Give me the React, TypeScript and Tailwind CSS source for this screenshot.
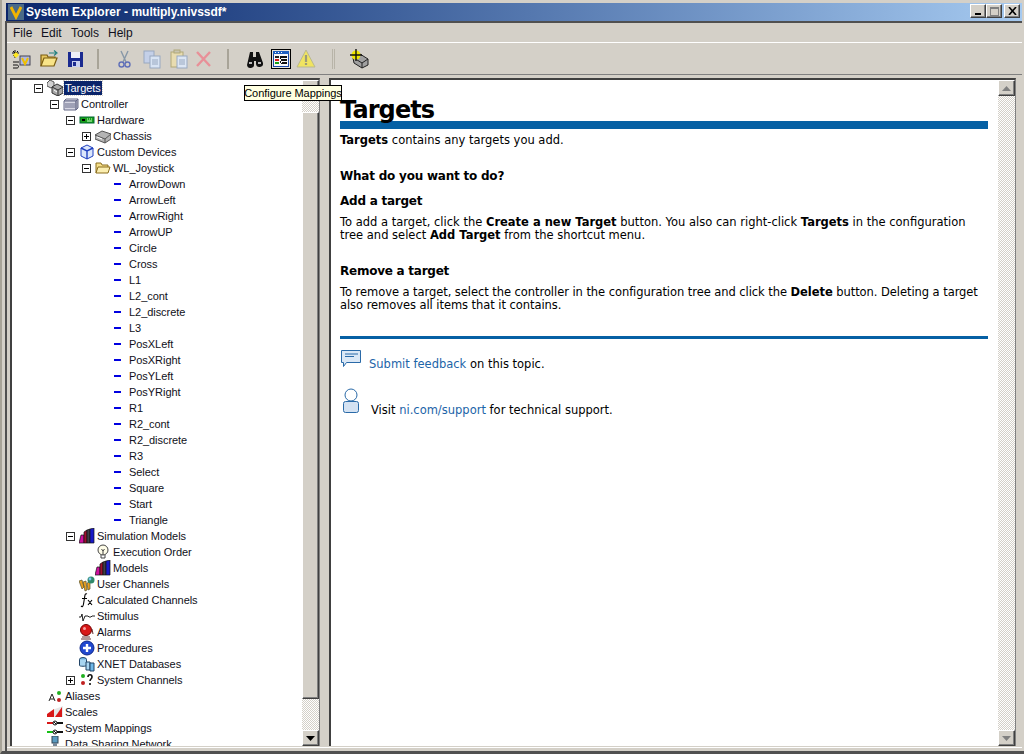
import React from "react";

const ditherClass =
  "bg-[repeating-conic-gradient(#d4d0c8_0_25%,#ffffff_0_50%)] bg-[length:2px_2px]";

const bevelClass =
  "bg-[#d4d0c8] border border-t-white border-l-white border-r-[#404040] border-b-[#404040] shadow-[inset_-1px_-1px_0_#808080]";

/* tree icons, all 16x16 */
const TargetsIcon = () => (
  <svg width="16" height="16" viewBox="0 0 16 16">
    <path d="M0 3l3-3 4 2v4L4 8 0 6z" fill="#d0d0d0" stroke="#555" />
    <path d="M5 7l5-3 6 3v6l-5 3-6-3z" fill="#a8a8a8" stroke="#333" />
    <path d="M5 7l6 3 5-3M11 10v6" fill="none" stroke="#333" />
    <path d="M7 10l3 2" stroke="#fff" />
  </svg>
);
const ControllerIcon = () => (
  <svg width="16" height="16" viewBox="0 0 16 16">
    <path d="M1 5l2-2h12l-2 2H1z" fill="#f0f0f4" stroke="#666a88" />
    <path d="M1 5h12v9H1z" fill="#d8d8e4" stroke="#666a88" />
    <path d="M13 5l2-2v9l-2 2z" fill="#b0b0c0" stroke="#666a88" />
    <path d="M3 7v5M5 7v5M7 7v5M9 7v5M11 7v5" stroke="#666a88" fill="none" />
  </svg>
);
const HardwareIcon = () => (
  <svg width="16" height="16" viewBox="0 0 16 16">
    <rect x="1" y="5" width="14" height="6" fill="#18a018" stroke="#063" />
    <rect x="3" y="7" width="3" height="2" fill="#000" />
    <path d="M8 7h1M10 7h1M12 7h1M8 9h5" stroke="#cfc" />
  </svg>
);
const ChassisIcon = () => (
  <svg width="16" height="16" viewBox="0 0 16 16">
    <path d="M0 7l7-4 9 3v5l-6 4-10-4z" fill="#b4b4b4" stroke="#555" />
    <path d="M0 7l10 4 6-5M10 11v4" fill="none" stroke="#555" />
    <path d="M2 9l5 2" stroke="#fff" />
  </svg>
);
const CubeIcon = () => (
  <svg width="16" height="16" viewBox="0 0 16 16">
    <path d="M8 1l6 3v8l-6 3-6-3V4z" fill="#dbe6fb" stroke="#2040c0" />
    <path d="M2 4l6 3 6-3M8 7v8" fill="none" stroke="#2040c0" strokeWidth="1.400" />
  </svg>
);
const FolderIcon = () => (
  <svg width="16" height="16" viewBox="0 0 16 16">
    <path d="M1 13V3h5l1 2h6v2" fill="#f6e08a" stroke="#8a6d1c" />
    <path d="M1 13l2-6h12l-2 6z" fill="#fbeeb0" stroke="#8a6d1c" />
  </svg>
);
const DashIcon = () => (
  <svg width="16" height="16" viewBox="0 0 16 16">
    <rect x="3" y="7" width="7" height="2" fill="#0000e0" />
  </svg>
);
const ModelsIcon = () => (
  <svg width="16" height="16" viewBox="0 0 16 16">
    <path d="M0 15l2-8h3v8z" fill="#d010a0" stroke="#111" strokeWidth=".7" />
    <path d="M5 15V4l3-2v13z" fill="#a01030" stroke="#111" strokeWidth=".7" />
    <path d="M8 15V2l3-1v14z" fill="#404048" stroke="#111" strokeWidth=".7" />
    <path d="M11 15V1l4-1v15z" fill="#1818c8" stroke="#111" strokeWidth=".7" />
  </svg>
);
const BulbIcon = () => (
  <svg width="16" height="16" viewBox="0 0 16 16">
    <circle cx="8" cy="6" r="5" fill="#fffde8" stroke="#444" />
    <path d="M6 11v3h4v-3M6.500 5l1.500 2 1.500-2M8 7v4" fill="none" stroke="#444" />
  </svg>
);
const UserChannelsIcon = () => (
  <svg width="16" height="16" viewBox="0 0 16 16">
    <path d="M0 5l3-1 2 7-2 2zM4 6l3-1 1 9-2 1zM8 7l3-1v7l-2 1z" fill="#e8a020" stroke="#553" strokeWidth=".7" />
    <circle cx="12" cy="4" r="3.500" fill="#2f8a6a" />
    <circle cx="11" cy="3" r="1.400" fill="#7fc4f0" />
  </svg>
);
const FxIcon = () => (
  <svg width="16" height="16" viewBox="0 0 16 16">
    <path d="M8 2C6 1 6 3 5.500 6l-1 6C4 15 3 15 2 14M3 6.500h5M9 8l4 5M13 8l-4 5" fill="none" stroke="#000" strokeWidth="1.100" />
  </svg>
);
const StimulusIcon = () => (
  <svg width="16" height="16" viewBox="0 0 16 16">
    <path d="M0 9h2l1-3 1 7 2-5h3l1 1h2l1-1h3" fill="none" stroke="#222" />
  </svg>
);
const AlarmIcon = () => (
  <svg width="16" height="16" viewBox="0 0 16 16">
    <circle cx="7" cy="6" r="5.500" fill="#d81818" stroke="#700" />
    <circle cx="5.500" cy="4.500" r="1.500" fill="#f8a0a0" />
    <path d="M3 13h8M2 15h10M13 5l1 5" stroke="#633" fill="none" />
  </svg>
);
const ProceduresIcon = () => (
  <svg width="16" height="16" viewBox="0 0 16 16">
    <circle cx="8" cy="8" r="7" fill="#2048d0" stroke="#102888" />
    <path d="M8 4v8M4 8h8" stroke="#fff" strokeWidth="2.400" />
  </svg>
);
const XnetIcon = () => (
  <svg width="16" height="16" viewBox="0 0 16 16">
    <ellipse cx="4" cy="3.500" rx="3.500" ry="2" fill="#70b8e8" stroke="#246" />
    <path d="M.5 3.500v6c0 1 7 1 7 0v-6" fill="#a8d4f0" stroke="#246" />
    <path d="M7 6h4v8H7z" fill="#a8d4f0" stroke="#246" />
    <path d="M11 7h4v8h-4z" fill="#70b8e8" stroke="#246" />
  </svg>
);
const SysChannelsIcon = () => (
  <svg width="16" height="16" viewBox="0 0 16 16">
    <circle cx="4" cy="4" r="2" fill="#20b020" />
    <circle cx="4" cy="11" r="2" fill="#c02020" />
    <path d="M9 5c0-3 4-3 4 0 0 2-2 2-2 4M11 11v2" fill="none" stroke="#111" strokeWidth="1.600" />
  </svg>
);
const AliasesIcon = () => (
  <svg width="16" height="16" viewBox="0 0 16 16">
    <path d="M2 13l3-7 3 7M3 11h4" fill="none" stroke="#222" />
    <circle cx="12" cy="5" r="2" fill="#20b020" />
    <circle cx="12" cy="12" r="2" fill="#c02020" />
  </svg>
);
const ScalesIcon = () => (
  <svg width="16" height="16" viewBox="0 0 16 16">
    <path d="M0 10l7-5v8H0z" fill="#d81818" />
    <path d="M7 5h1l8-3v11H7z" fill="#e8e8e8" />
    <path d="M8 13l7-10v10z" fill="#d81818" />
  </svg>
);
const MappingsIcon = () => (
  <svg width="16" height="16" viewBox="0 0 16 16">
    <rect x="0" y="2" width="6" height="2" fill="#d81818" />
    <rect x="10" y="2" width="6" height="2" fill="#111" />
    <rect x="0" y="11" width="6" height="2" fill="#18c018" />
    <rect x="10" y="11" width="6" height="2" fill="#111" />
    <circle cx="8" cy="3" r="2" fill="#fff" stroke="#111" />
    <circle cx="8" cy="12" r="2" fill="#fff" stroke="#111" />
    <path d="M7 2l2 2M7 11l2 2" stroke="#111" />
  </svg>
);
const NetworkIcon = () => (
  <svg width="16" height="16" viewBox="0 0 16 16">
    <rect x="5" y="0" width="6" height="7" fill="#5a9ac0" stroke="#345" />
    <rect x="6" y="7" width="4" height="8" fill="#789" />
  </svg>
);

/* toolbar icons, 20x20 */
const NewIcon = () => (
  <svg width="20" height="20" viewBox="0 0 20 20">
    <path d="M3 1v8M0 4h7M1 2l5 5M6 2L1 7" stroke="#111" />
    <path d="M4 3l3 3-3 3-3-3z" fill="#ffe820" />
    <rect x="8" y="7" width="10" height="9" fill="#b0b8e0" stroke="#445" />
    <path d="M10 9l3 6 3-6" fill="none" stroke="#f0c000" strokeWidth="2" />
    <path d="M1 13h6M1 16h4c2 0 2 3 0 3H1" fill="none" stroke="#111" />
  </svg>
);
const OpenIcon = () => (
  <svg width="20" height="20" viewBox="0 0 20 20">
    <path d="M2 17V6h6l1 2h7v2" fill="#e8c860" stroke="#7a5c10" strokeWidth="1.200" />
    <path d="M2 17l3-8h13l-3 8z" fill="#f8e488" stroke="#7a5c10" strokeWidth="1.200" />
    <path d="M10 4h7M15 1.500L18 4l-3 2.500" fill="none" stroke="#208080" strokeWidth="1.200" />
  </svg>
);
const SaveIcon = () => (
  <svg width="20" height="20" viewBox="0 0 20 20">
    <path d="M2 3h15v15H2z" fill="#1a2a90" />
    <rect x="5" y="3" width="9" height="6" fill="#f0f0f8" />
    <rect x="6" y="12" width="8" height="6" fill="#c8d0f0" />
    <rect x="7" y="13" width="3" height="4" fill="#1a2a90" />
  </svg>
);
const CutIcon = () => (
  <svg width="20" height="20" viewBox="0 0 20 20">
    <path d="M6 2l5 11M13 2L8 13" stroke="#8898a8" strokeWidth="1.400" />
    <circle cx="6.500" cy="15.500" r="2.500" fill="none" stroke="#6070b8" strokeWidth="1.400" />
    <circle cx="12.500" cy="15.500" r="2.500" fill="none" stroke="#6070b8" strokeWidth="1.400" />
  </svg>
);
const CopyIcon = () => (
  <svg width="20" height="20" viewBox="0 0 20 20">
    <rect x="2" y="2" width="10" height="12" fill="#c4d0e8" stroke="#98a8c0" />
    <rect x="8" y="7" width="10" height="12" fill="#d8e4f4" stroke="#98a8c0" />
    <path d="M10 11h6M10 13h6M10 15h6" stroke="#98a8c0" />
  </svg>
);
const PasteIcon = () => (
  <svg width="20" height="20" viewBox="0 0 20 20">
    <rect x="2" y="3" width="12" height="15" fill="#e8dcb0" stroke="#b0a878" />
    <rect x="5" y="1" width="6" height="3" fill="#c8c4b0" stroke="#b0a878" />
    <rect x="8" y="7" width="10" height="12" fill="#dce6f4" stroke="#98a8c0" />
    <path d="M10 11h6M10 13h6M10 15h6" stroke="#98a8c0" />
  </svg>
);
const DeleteIcon = () => (
  <svg width="20" height="20" viewBox="0 0 20 20">
    <path d="M3 3l13 14M16 3L3 17" stroke="#e89098" strokeWidth="2.400" />
  </svg>
);
const FindIcon = () => (
  <svg width="20" height="20" viewBox="0 0 20 20">
    <path d="M5 3h3v5h3V3h3l4 11a3 3 0 01-7 1v-3H9v3a3 3 0 01-7 1z" fill="#111" />
    <rect x="4" y="13" width="3" height="2" fill="#bbb" />
    <rect x="13" y="13" width="3" height="2" fill="#bbb" />
  </svg>
);
const ConfigureIcon = () => (
  <svg width="16" height="16" viewBox="0 0 16 16">
    <rect x=".5" y=".5" width="15" height="15" fill="#f8f8f8" stroke="#1848a8" />
    <rect x="0" y="0" width="16" height="3" fill="#2060c0" />
    <path d="M2 1.500h1M5 1.500h1M8 1.500h1" stroke="#fff" />
    <rect x="2" y="5" width="4" height="2" fill="#222" />
    <rect x="2" y="8" width="4" height="2" fill="#d81818" />
    <rect x="2" y="11" width="4" height="2" fill="#18a018" />
    <path d="M7 6h7M9 9h5M9 12h5" stroke="#111" strokeWidth="2" />
    <path d="M7 7l2 2-2 2 2 2" stroke="#111" fill="none" />
  </svg>
);
const WarningIcon = () => (
  <svg width="20" height="20" viewBox="0 0 20 20">
    <path d="M10 1l9 17H1z" fill="#f0e460" stroke="#b8b890" />
    <path d="M10 6v7M10 14v2" stroke="#9c9c78" strokeWidth="2.200" />
  </svg>
);
const DeployIcon = () => (
  <svg width="20" height="20" viewBox="0 0 20 20">
    <path d="M4 9l7-4 8 5v6l-6 3-8-5z" fill="#a0a0a0" stroke="#222" />
    <path d="M5 9l8 5 6-4M13 14v5" fill="none" stroke="#222" />
    <circle cx="7" cy="6" r="4.500" fill="#f0e800" />
    <path d="M7 0v12M1 6h12" stroke="#111" strokeWidth="1.400" />
  </svg>
);

const Minus = ({ plus }: { plus?: boolean }) => (
  <svg width="9" height="9" viewBox="0 0 9 9" className="block">
    <rect x=".5" y=".5" width="8" height="8" fill="#fff" stroke="#333" />
    <path d="M2 4.500h5" stroke="#000" />
    {plus && <path d="M4.500 2v5" stroke="#000" />}
  </svg>
);

type Row = {
  label: string;
  indent: string;
  icon: React.ReactNode;
  toggle?: "open" | "closed";
  selected?: boolean;
};

const leaves = [
  "ArrowDown", "ArrowLeft", "ArrowRight", "ArrowUP", "Circle", "Cross", "L1", "L2_cont",
  "L2_discrete", "L3", "PosXLeft", "PosXRight", "PosYLeft", "PosYRight", "R1", "R2_cont",
  "R2_discrete", "R3", "Select", "Square", "Start", "Triangle",
];

const rows: Row[] = [
  { label: "Targets", indent: "pl-[22px]", icon: <TargetsIcon />, toggle: "open", selected: true },
  { label: "Controller", indent: "pl-[38px]", icon: <ControllerIcon />, toggle: "open" },
  { label: "Hardware", indent: "pl-[54px]", icon: <HardwareIcon />, toggle: "open" },
  { label: "Chassis", indent: "pl-[70px]", icon: <ChassisIcon />, toggle: "closed" },
  { label: "Custom Devices", indent: "pl-[54px]", icon: <CubeIcon />, toggle: "open" },
  { label: "WL_Joystick", indent: "pl-[70px]", icon: <FolderIcon />, toggle: "open" },
  ...leaves.map((label) => ({ label, indent: "pl-[86px]", icon: <DashIcon /> })),
  { label: "Simulation Models", indent: "pl-[54px]", icon: <ModelsIcon />, toggle: "open" },
  { label: "Execution Order", indent: "pl-[70px]", icon: <BulbIcon /> },
  { label: "Models", indent: "pl-[70px]", icon: <ModelsIcon /> },
  { label: "User Channels", indent: "pl-[54px]", icon: <UserChannelsIcon /> },
  { label: "Calculated Channels", indent: "pl-[54px]", icon: <FxIcon /> },
  { label: "Stimulus", indent: "pl-[54px]", icon: <StimulusIcon /> },
  { label: "Alarms", indent: "pl-[54px]", icon: <AlarmIcon /> },
  { label: "Procedures", indent: "pl-[54px]", icon: <ProceduresIcon /> },
  { label: "XNET Databases", indent: "pl-[54px]", icon: <XnetIcon /> },
  { label: "System Channels", indent: "pl-[54px]", icon: <SysChannelsIcon />, toggle: "closed" },
  { label: "Aliases", indent: "pl-[22px]", icon: <AliasesIcon /> },
  { label: "Scales", indent: "pl-[22px]", icon: <ScalesIcon /> },
  { label: "System Mappings", indent: "pl-[22px]", icon: <MappingsIcon /> },
  { label: "Data Sharing Network", indent: "pl-[22px]", icon: <NetworkIcon /> },
];

const TreeRow = ({ row }: { row: Row }) => (
  <div className={`flex items-center h-4 ${row.indent}`}>
    <div className="w-[13px] shrink-0">
      {row.toggle && <Minus plus={row.toggle === "closed"} />}
    </div>
    <div className="w-4 h-4 shrink-0">{row.icon}</div>
    <span
      className={`ml-px px-px leading-[14px] whitespace-nowrap ${
        row.selected ? "bg-[#0a246a] text-white outline-1 outline-dotted outline-[#d4d0c8]" : "text-[#101020]"
      }`}
    >
      {row.label}
    </span>
  </div>
);

const ScrollButton = ({ up, faded }: { up?: boolean; faded?: boolean }) => (
  <div className={`h-4 shrink-0 flex items-center justify-center ${bevelClass}`}>
    <svg width="9" height="5" viewBox="0 0 9 5">
      <path d={up ? "M4.500 0L9 5H0z" : "M0 0h9L4.500 5z"} fill={faded ? "#808080" : "#000"} />
    </svg>
  </div>
);

const Link = ({ children }: { children: React.ReactNode }) => (
  <span className="text-[#1c64a8]">{children}</span>
);

const toolbarBtn = "w-6 h-6 flex items-center justify-center shrink-0";

export default function App() {
  return (
    <div className="relative w-[1024px] h-[754px] overflow-hidden bg-[#d4d0c8] flex flex-col pt-[3px] border-l-2 border-l-[#a8a498] border-b-[3px] border-b-[#505050] font-['Liberation_Sans',sans-serif] text-[11px] tracking-[-0.05px]">
      {/* title bar */}
      <div className="h-[18px] ml-[4px] mr-[2px] flex items-center shrink-0 bg-gradient-to-r from-[#0a246a] to-[#a6caf0]">
        <svg width="16" height="16" viewBox="0 0 16 16" className="ml-[2px] shrink-0">
          <rect width="16" height="16" fill="#4a6a88" />
          <path d="M3 3l5 10 5-10" fill="none" stroke="#f2b400" strokeWidth="2.800" />
        </svg>
        <span className="ml-[2px] text-white font-bold text-[12px] tracking-normal">
          System Explorer - multiply.nivssdf*
        </span>
        <div className="ml-auto mr-[2px] mb-[2px] flex items-center">
          <div className={`w-4 h-[14px] flex items-end justify-center pb-[2px] ${bevelClass}`}>
            <div className="w-[6px] h-[2px] bg-black" />
          </div>
          <div className={`w-4 h-[14px] flex items-center justify-center ${bevelClass}`}>
            <div className="w-[9px] h-[9px] border border-t-2 border-[#808080]" />
          </div>
          <div className={`w-4 h-[14px] ml-[2px] flex items-center justify-center ${bevelClass}`}>
            <svg width="9" height="8" viewBox="0 0 9 8">
              <path d="M1 0l7 8M8 0L1 8" stroke="#000" strokeWidth="1.600" />
            </svg>
          </div>
        </div>
      </div>

      <div className="flex-1 min-h-0 flex flex-col ml-[3px] border-l-2 border-l-[#505050]">
        {/* menu */}
        <div className="h-[22px] mr-[2px] shrink-0 flex items-center pl-[6px] border-t-2 border-[#505050] border-b border-b-white text-[12px] tracking-normal text-[#101020]">
          <span className="w-[28px]">File</span>
          <span className="w-[30px]">Edit</span>
          <span className="w-[37px]">Tools</span>
          <span>Help</span>
        </div>

        {/* toolbar */}
        <div className="h-[32px] mr-[2px] shrink-0 flex items-center pl-[3px] border-b border-[#808080]">
          <div className={toolbarBtn}><NewIcon /></div>
          <div className={`${toolbarBtn} ml-[3px]`}><OpenIcon /></div>
          <div className={`${toolbarBtn} ml-[3px]`}><SaveIcon /></div>
          <div className="w-[2px] h-5 ml-[9px] bg-[#a8a498]" />
          <div className={`${toolbarBtn} ml-[14px]`}><CutIcon /></div>
          <div className={`${toolbarBtn} ml-[3px]`}><CopyIcon /></div>
          <div className={`${toolbarBtn} ml-[3px]`}><PasteIcon /></div>
          <div className={`${toolbarBtn} ml-[1px]`}><DeleteIcon /></div>
          <div className="w-[2px] h-5 ml-[11px] bg-[#a8a498]" />
          <div className={`${toolbarBtn} ml-[14px]`}><FindIcon /></div>
          <div className="ml-[4px] w-[20px] h-[20px] shrink-0 flex items-center justify-center border border-black bg-[#e8e4dc]"><ConfigureIcon /></div>
          <div className={`${toolbarBtn} ml-[3px]`}><WarningIcon /></div>
          <div className="w-[3px] h-5 ml-[14px] border-x border-[#b8b4a8]" />
          <div className={`${toolbarBtn} ml-[12px]`}><DeployIcon /></div>
        </div>

        {/* panels */}
        <div className="flex-1 min-h-0 flex ml-[3px] mr-[8px] mt-[3px]">
          <div className="w-[310px] shrink-0 flex border-t-2 border-l-2 border-[#404040] border-r border-r-[#808080] bg-white overflow-hidden">
            <div className="flex-1 min-w-0 overflow-hidden">
              {rows.map((row) => (
                <TreeRow key={row.label} row={row} />
              ))}
            </div>
            <div className="w-[17px] shrink-0 flex flex-col">
              <ScrollButton up />
              <div className={`h-[16px] ${ditherClass}`} />
              <div className={`flex-1 ${bevelClass}`} />
              <div className={`h-[31px] ${ditherClass}`} />
              <ScrollButton />
            </div>
          </div>

          <div className="w-[687px] ml-[9px] shrink-0 flex border-t-2 border-l-2 border-[#404040] border-r border-r-[#808080] bg-white overflow-hidden">
            <div className="flex-1 min-w-0 pl-[9px] pr-[10px] pt-[21px] font-['DejaVu_Sans',sans-serif] text-[11.5px] leading-[13px] tracking-normal text-black">
              <h1 className="text-[24px] leading-[19px] font-bold tracking-[-0.9px]">Targets</h1>
              <div className="h-2 bg-[#0660a4] mt-[1px]" />
              <p className="mt-[5px]">
                <b>Targets</b> contains any targets you add.
              </p>
              <h2 className="mt-[22px] text-[12px] leading-[15px] font-bold tracking-[-0.22px]">What do you want to do?</h2>
              <h3 className="mt-[10px] text-[12px] leading-[15px] font-bold tracking-[-0.25px]">Add a target</h3>
              <p className="mt-[7px]">
                To add a target, click the <b>Create a new Target</b> button. You also can right-click{" "}
                <b>Targets</b> in the configuration tree and select <b>Add Target</b> from the shortcut menu.
              </p>
              <h3 className="mt-[22px] text-[12px] leading-[15px] font-bold tracking-[-0.25px]">Remove a target</h3>
              <p className="mt-[7px] tracking-[-0.06px]">
                To remove a target, select the controller in the configuration tree and click the{" "}
                <b>Delete</b> button. Deleting a target also removes all items that it contains.
              </p>
              <div className="h-[3px] bg-[#0660a4] mt-[24px]" />
              <div className="flex items-start mt-[10px]">
                <svg width="22" height="20" viewBox="0 0 22 20" className="shrink-0">
                  <path d="M1.500 1.500h19v12h-14l-3 4v-4h-2z" fill="#dbe8f6" stroke="#2a6aa8" />
                  <path d="M5 5h13M5 7.500h9" stroke="#2a6aa8" />
                </svg>
                <p className="ml-[7px] mt-[9px]">
                  <Link>Submit feedback</Link> on this topic.
                </p>
              </div>
              <div className="flex items-start mt-[17px]">
                <svg width="18" height="26" viewBox="0 0 18 26" className="shrink-0 ml-[2px]">
                  <circle cx="9" cy="7" r="6" fill="#fff" stroke="#2a6aa8" />
                  <rect x="1.500" y="13.500" width="15" height="11" rx="2" fill="#d4e2f2" stroke="#2a6aa8" />
                </svg>
                <p className="ml-[11px] mt-[16px]">
                  Visit <Link>ni.com/support</Link> for technical support.
                </p>
              </div>
            </div>
            <div className={`w-[17px] shrink-0 flex flex-col ${ditherClass}`}>
              <ScrollButton up faded />
              <div className="flex-1" />
              <ScrollButton faded />
            </div>
          </div>
        </div>
        <div className="h-px shrink-0 bg-white mt-px mb-[3px] mr-[2px]" />
      </div>

      {/* tooltip */}
      <div className="absolute left-[242px] top-[85px] h-4 w-[98px] bg-[#ffffe1] border border-black flex items-center justify-center whitespace-nowrap text-[11px] text-black">
        Configure Mappings
      </div>
    </div>
  );
}
